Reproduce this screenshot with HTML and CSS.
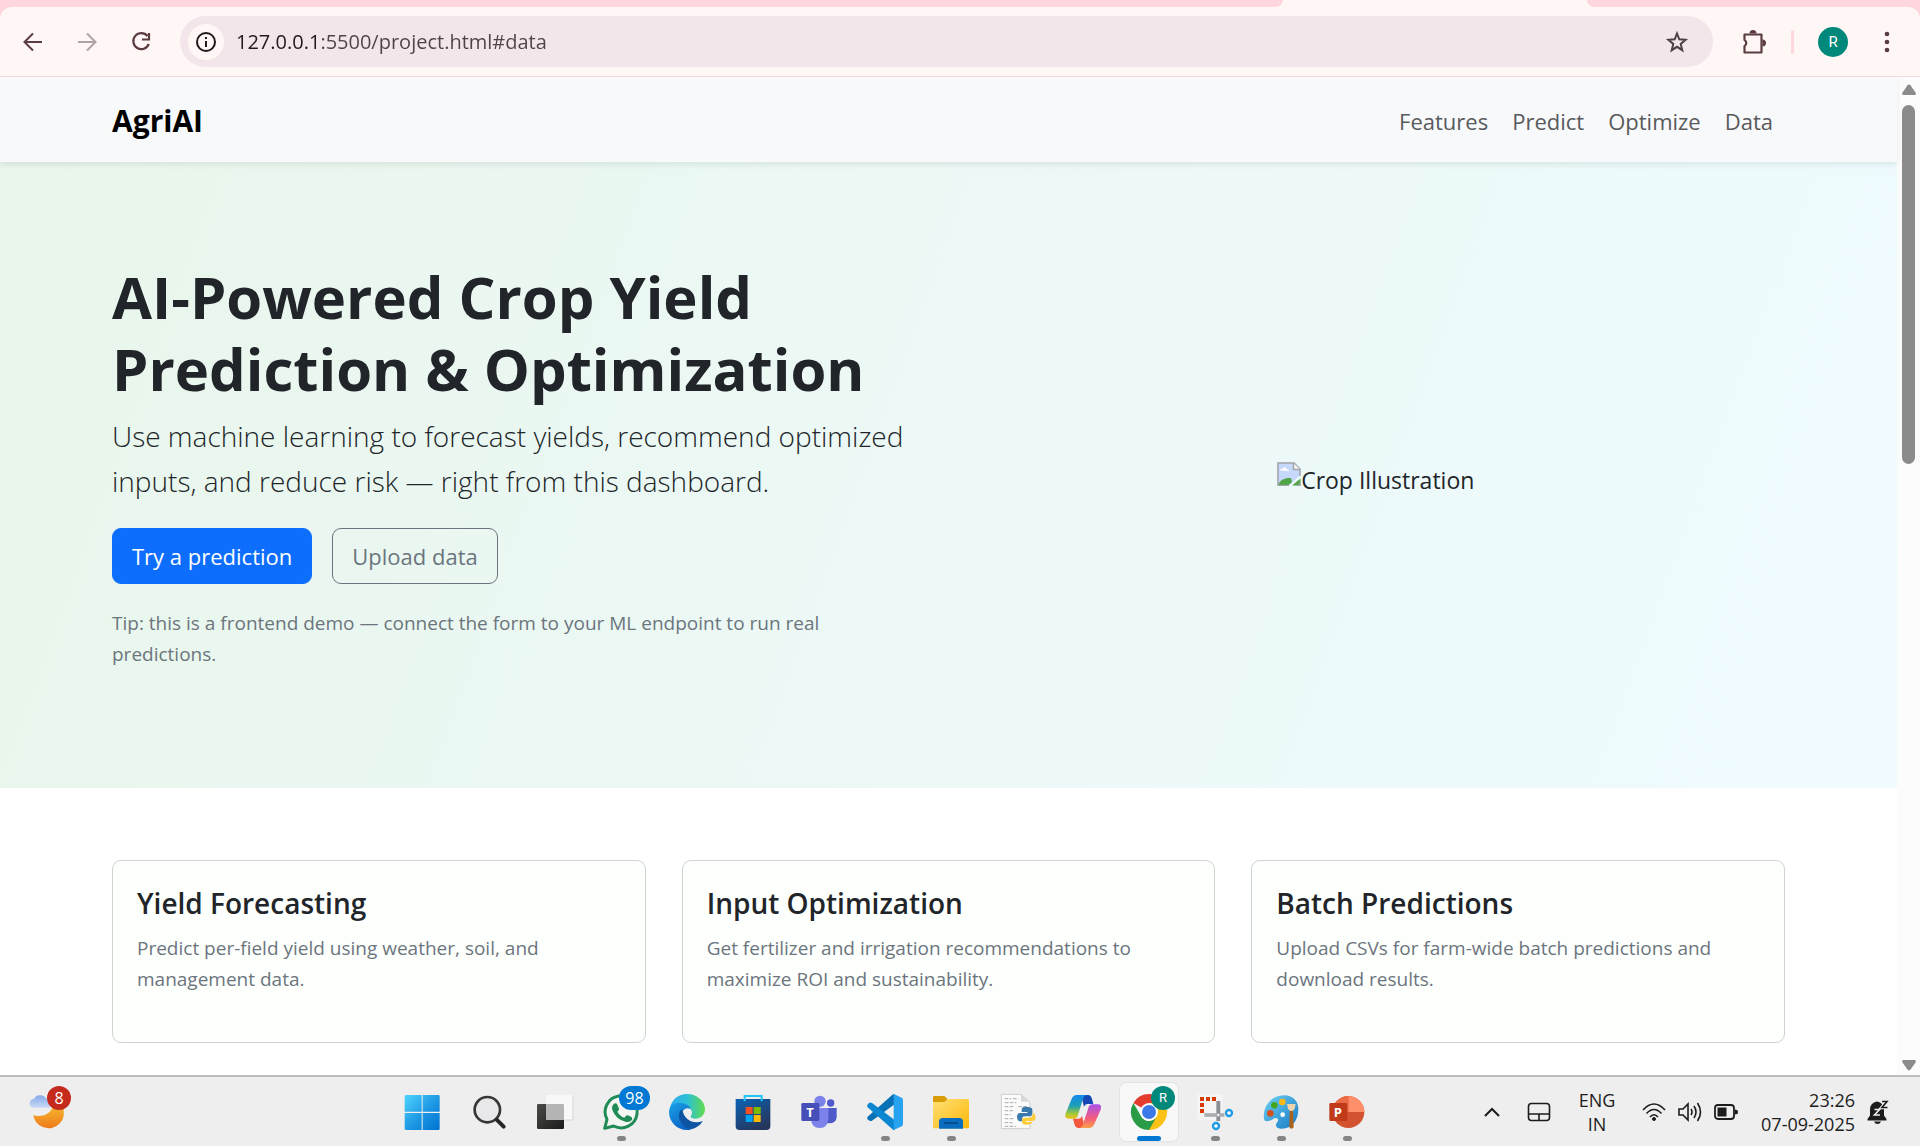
FILE: index.html
```html
<!DOCTYPE html>
<html lang="en">
<head>
<meta charset="utf-8">
<title>AgriAI</title>
<link rel="stylesheet" href="styles.css">
</head>
<body>
<header class="browser">
  <div class="tabstrip"><span class="tabs-before"></span><span class="tab-active"></span><span class="tabs-after"></span></div>
  <div class="toolbar-wrap">
    <div class="toolbar">
      <button class="tool" aria-label="Back"><svg width="24" height="24" viewBox="0 0 24 24" fill="none" stroke="#5b3c42" stroke-width="2"><path d="M21 12H4.500M12 3.500 3.500 12l8.500 8.500"/></svg></button>
      <button class="tool" aria-label="Forward"><svg width="24" height="24" viewBox="0 0 24 24" fill="none" stroke="#b0a3a4" stroke-width="2"><path d="M3 12h16.500M12 3.500l8.500 8.500-8.500 8.500"/></svg></button>
      <button class="tool" aria-label="Reload"><svg width="24" height="24" viewBox="0 0 24 24" fill="none" stroke="#5b3c42" stroke-width="2.200"><path d="M18.500 6A8 8 0 1 0 19.800 14"/><path d="M20 3v6.500h-7" /></svg></button>
      <div class="omnibox">
        <button class="site-info" aria-label="Site information"><svg width="22" height="22" viewBox="0 0 22 22" fill="none" stroke="#1f1a1b" stroke-width="2"><circle cx="11" cy="11" r="9"/><path d="M11 10v6M11 6v2"/></svg></button>
        <input class="url" type="text" aria-label="Address" value="127.0.0.1:5500/project.html#data">
        <button class="star" aria-label="Bookmark this page"><svg width="24" height="24" viewBox="0 0 24 24" fill="none" stroke="#4d4144" stroke-width="2"><path d="M12 3.500l2.300 5.800 6.300.5-4.900 4.100 1.600 6.300L12 16.800l-5.300 3.400 1.600-6.300-4.900-4.100 6.300-.5z"/></svg></button>
      </div>
      <button class="extensions" aria-label="Extensions"><svg width="26" height="26" viewBox="0 0 26 26"><path d="M3.500 5.500h17v18h-17v-6.200a3.800 3.800 0 0 0 0-6.400z" fill="none" stroke="#5b3c42" stroke-width="2.200" stroke-linejoin="round"/><path d="M8.500 4.500a3.500 3.500 0 0 1 7 0zM21.500 10.500a3.500 3.500 0 0 1 0 7z" fill="#5b3c42"/></svg></button>
      <span class="divider"></span>
      <button class="profile" aria-label="Profile">R</button>
      <button class="menu" aria-label="Menu"><svg width="24" height="24" viewBox="0 0 24 24" fill="#5b3c42"><circle cx="12" cy="4" r="2.300"/><circle cx="12" cy="12" r="2.300"/><circle cx="12" cy="20" r="2.300"/></svg></button>
    </div>
  </div>
</header>

<div class="viewport">
  <div class="page">
    <nav class="navbar">
      <a class="brand" href="#">AgriAI</a>
      <div class="links"><a href="#features">Features</a><a href="#predict">Predict</a><a href="#optimize">Optimize</a><a href="#data">Data</a></div>
    </nav>
    <section class="hero">
      <div class="hero-copy">
        <h1>AI-Powered Crop Yield Prediction &amp; Optimization</h1>
        <p class="lead">Use machine learning to forecast yields, recommend optimized inputs, and reduce risk — right from this dashboard.</p>
        <div class="actions">
          <button class="btn primary">Try a prediction</button>
          <button class="btn outline">Upload data</button>
        </div>
        <p class="tip">Tip: this is a frontend demo — connect the form to your ML endpoint to run real predictions.</p>
      </div>
      <div class="hero-image">
        <svg width="24" height="24" viewBox="0 0 24 24"><path d="M.5.500h16.500l6 6v7L12 23.500H.500z" fill="#c6d8fb"/><path d="M3 8.500c.3-2 2-2 2.500-1.500 1-2.500 4-2 4 .2 1.500-.2 2.500.8 2.500 1.800z" fill="#fff"/><path d="M1 23c2-5 7-7.500 13-7l1 4-4 3.500z" fill="#4ea545"/><path d="M15 23.500l8.500-7v7z" fill="#4ea545"/><path d="M12 23.500H1V1h16l6 6v7M19.500 23.500H23V20" fill="none" stroke="#a3a5a8" stroke-width="1.500"/><path d="M16.500 1v6.500H23" fill="#f6f6f6" stroke="#a3a5a8" stroke-width="1.500"/></svg><span>Crop Illustration</span>
      </div>
    </section>
    <section class="features" id="features">
      <article class="card"><h2>Yield Forecasting</h2><p>Predict per-field yield using weather, soil, and management data.</p></article>
      <article class="card"><h2>Input Optimization</h2><p>Get fertilizer and irrigation recommendations to maximize ROI and sustainability.</p></article>
      <article class="card"><h2>Batch Predictions</h2><p>Upload CSVs for farm-wide batch predictions and download results.</p></article>
    </section>
  </div>
  <div class="scrollbar">
    <svg width="16" height="12" viewBox="0 0 16 12" fill="#8b8b8b"><path d="M6.600 1.200Q8 0 9.400 1.200L14.500 8.500Q15.500 11 13.500 11H2.500Q.5 11 1.500 8.500z"/></svg>
    <div class="track"><div class="thumb"></div></div>
    <svg width="16" height="12" viewBox="0 0 16 12" fill="#8b8b8b"><path d="M6.600 10.800Q8 12 9.400 10.800L14.500 3.500Q15.500 1 13.500 1H2.500Q.5 1 1.500 3.500z"/></svg>
  </div>
</div>

<footer class="taskbar">
  <div class="widgets">
    <button class="app weather" aria-label="Weather"><svg viewBox="0 0 108 108"><defs><linearGradient id="moon" x2="0" y2="1"><stop offset="0" stop-color="#f5b52f"/><stop offset="1" stop-color="#ee7a1b"/></linearGradient><linearGradient id="cloud" x2="0" y2="1"><stop offset="0" stop-color="#86a9ea"/><stop offset="1" stop-color="#c9daf6"/></linearGradient></defs><path d="M101 50A46 46 0 0 1 10 64C36 70 62 60 68 38L101 40z" fill="url(#moon)"/><path d="M12 41a13 13 0 0 1 0-26 20 18 0 0 1 36-2q12 4 12 28z" fill="url(#cloud)"/></svg><span class="badge red">8</span></button>
  </div>
  <div class="apps">
    <button class="app" aria-label="Start"><svg viewBox="0 0 108 108"><defs><linearGradient id="win" x2="1" y2="1"><stop offset="0" stop-color="#4fd5ff"/><stop offset=".55" stop-color="#1c96e3"/><stop offset="1" stop-color="#0072d0"/></linearGradient></defs><path d="M2 3h48v50H-1V7q0-4 4-4zM53 3h47q4 0 4 4v46H53zM-1 57h51v51H3q-4 0-4-4zM53 57h51v47q0 4-4 4H53z" fill="url(#win)"/></svg></button>
    <button class="app" aria-label="Search"><svg viewBox="0 0 108 108"><circle cx="49" cy="47" r="38" fill="#e8e8ea" stroke="#363636" stroke-width="8"/><path d="M77 77l21 21" stroke="#262626" stroke-width="12" stroke-linecap="round"/></svg></button>
    <button class="app" aria-label="Task view"><svg viewBox="0 0 108 108"><defs><linearGradient id="tv" x2="1" y2="1"><stop offset="0" stop-color="#4a4a48"/><stop offset="1" stop-color="#1b1b1b"/></linearGradient></defs><rect y="30" width="81" height="75" rx="4" fill="url(#tv)"/><path d="M27 7q0-4 4-4h73q4 0 4 4v67q0 4-4 4H27z" fill="#f8f8f8"/><path d="M27 30h50q4 0 4 4v44H27z" fill="#b4b4b4"/><path d="M82 78h26V8" fill="none" stroke="#d4d4d4" stroke-width="3"/></svg></button>
    <button class="app open" aria-label="WhatsApp"><svg viewBox="0 0 108 108"><path d="M5 103l7-27A48 48 0 1 1 32 96z" fill="#f4f6f4" stroke="#1f8b55" stroke-width="9" stroke-linejoin="round"/><path d="M33 29q7-4 10 3l5 12q1 4-5 9 8 14 21 18l7-7q4-2 13 4 6 3 3 9-5 9-18 7Q39 77 28 48q-3-12 5-19z" fill="#1f8b55"/></svg><span class="badge blue">98</span></button>
    <button class="app" aria-label="Edge"><svg viewBox="0 0 108 108"><defs><linearGradient id="e1" x2="1"><stop offset="0" stop-color="#2fa9f0"/><stop offset=".5" stop-color="#2cc0d6"/><stop offset="1" stop-color="#62db4c"/></linearGradient><linearGradient id="e2" x2=".6" y2="1"><stop offset="0" stop-color="#1aa2e6"/><stop offset="1" stop-color="#0b62c5"/></linearGradient></defs><path d="M2 45C8 16 28 0 54 0c31 0 54 22 54 46 0 18-14 28-29 28-11 0-17-4-12-10 4-6 3-15-5-21Q30 22 2 45z" fill="url(#e1)"/><path d="M0 54C1 32 18 26 33 27c18 1 31 10 32 18-12-7-28 2-27 21 2 23 17 36 31 39-6 3-11 3-15 3C24 108 0 84 0 54z" fill="url(#e2)"/><path d="M40 45q-12 8-10 24c3 22 22 38 39 36 15-4 27-13 32-24-27 12-58-4-61-36z" fill="#0d55a2"/></svg></button>
    <button class="app" aria-label="Microsoft Store"><svg viewBox="0 0 108 108"><defs><linearGradient id="st" x2=".6" y2="1"><stop offset="0" stop-color="#0b63b5"/><stop offset="1" stop-color="#25365c"/></linearGradient></defs><path d="M2 15h104v82q0 11-11 11H13q-11 0-11-11z" fill="url(#st)"/><path d="M29 22V6h51v16" fill="none" stroke="#22c5f4" stroke-width="6"/><path d="M32 39h21v21H32z" fill="#f25022"/><path d="M56 39h21v21H56z" fill="#7fba00"/><path d="M32 63h21v21H32z" fill="#00a4ef"/><path d="M56 63h21v21H56z" fill="#ffb900"/></svg></button>
    <button class="app" aria-label="Teams"><svg viewBox="0 0 108 108"><circle cx="57" cy="22" r="17" fill="#7b83eb"/><circle cx="89" cy="27" r="11" fill="#5059c9"/><path d="M75 42h32v28q-2 18-22 18H75z" fill="#5059c9"/><path d="M30 42h52v34q-2 26-26 26T30 76z" fill="#7b83eb"/><rect x="1" y="27" width="54" height="54" rx="4" fill="#464eb8"/></svg><span class="mark">T</span></button>
    <button class="app open" aria-label="Visual Studio Code"><svg viewBox="0 0 108 108"><path d="M5 79l-4-4q-2-4 1-7L78 1h5v30L15 80q-5 3-10-1z" fill="#0870b5"/><path d="M5 28l-4 5q-2 4 1 7l77 68h4V78L15 27q-5-3-10 1z" fill="#0c86d0"/><path d="M80 0l24 11q4 2 4 7v72q0 5-4 7l-24 11z" fill="#28a3f0"/></svg></button>
    <button class="app open" aria-label="File Explorer"><svg viewBox="0 0 108 108"><defs><linearGradient id="fx" x2="1" y2="1"><stop offset="0" stop-color="#ffdf76"/><stop offset="1" stop-color="#fbb808"/></linearGradient></defs><path d="M0 10q0-4 4-4h30l9 8v20H0z" fill="#d89c07"/><path d="M0 24h34l10-9h60q4 0 4 4v80q0 4-4 4H0z" fill="url(#fx)"/><path d="M18 104V83q0-11 11-11h50q11 0 11 11v21z" fill="#096cbe"/><path d="M33 87h42" stroke="#053f75" stroke-width="4"/></svg></button>
    <button class="app" aria-label="Python file"><svg viewBox="0 0 108 108"><path d="M7 1h59l27 24v79H7z" fill="#fbfbfb" stroke="#ccc" stroke-width="3"/><path d="M66 1v22h26z" fill="#d9d9d9"/><path d="M17 14h20M42 14h16M17 26h35M17 38h30M58 38h26M17 50h25M17 62h18M17 74h28M17 86h24M17 97h34" stroke="#aaa" stroke-width="3" stroke-dasharray="11 4"/><path d="M80 38q-12 0-12 8v8h17v3H62q-8 2-8 12 1 12 9 13h6v-8q1-7 9-7h15q7-1 7-8V46q-1-8-20-8z" fill="#397aae"/><path d="M81 92q-12 0-12-8v-7q0-6 8-6h16q8-1 8-8v-6h2q7 3 7 13-1 11-10 11H82v3h18q-1 8-19 8z" fill="#fbce3a"/></svg></button>
    <button class="app" aria-label="Copilot"><svg viewBox="0 0 108 108"><defs><linearGradient id="c1" x2="0" y2="1"><stop offset="0" stop-color="#1589ee"/><stop offset=".45" stop-color="#1b9fb6"/><stop offset=".8" stop-color="#a8ca36"/><stop offset="1" stop-color="#eebf20"/></linearGradient><linearGradient id="c2" x2="0" y2="1"><stop offset="0" stop-color="#a950ea"/><stop offset=".6" stop-color="#f55d7b"/><stop offset="1" stop-color="#fba04a"/></linearGradient></defs><path d="M48 3h21q9 0 12 12l4 15H67q-7 0-10 8z" fill="#1648b5"/><path d="M60 102H41q-10 0-13-13l-4-15h18q6 0 9-8z" fill="#f3573d"/><path d="M61 3H35q-11 0-16 14L2 58q-5 16 9 16h17q8 0 11-11l14-46Q57 4 66 3z" fill="url(#c1)"/><path d="M47 102h26q11 0 16-14l18-41q5-16-9-16H81q-8 0-11 11L55 88q-4 13-11 14z" fill="url(#c2)"/></svg></button>
    <button class="app open current" aria-label="Chrome"><svg viewBox="0 0 108 108"><path d="M54 54L7.200 27a54 54 0 0 1 93.600 0z" fill="#e33b2e"/><path d="M54 54L54 108A54 54 0 0 0 100.800 27H54z" fill="#fbc116"/><path d="M7.200 27L30.700 67.500A27 27 0 0 0 77 68L54 108A54 54 0 0 1 7.200 27z" fill="#2a9c48"/><circle cx="54" cy="54" r="27" fill="#fff"/><circle cx="54" cy="54" r="21" fill="#3c79e8"/></svg><span class="badge teal">R</span></button>
    <button class="app open" aria-label="Snipping Tool"><svg viewBox="0 0 108 108"><rect x="1" y="1" width="76" height="76" rx="6" fill="#f5f5f6"/><path d="M9 15h48M15 9v48" stroke="#d83b01" stroke-width="12" stroke-dasharray="12 6"/><path d="M64 21v60" stroke="#8b9196" stroke-width="12"/><path d="M22 63h60" stroke="#a9aeb2" stroke-width="11"/><circle cx="64" cy="63" r="3" fill="#fff"/><circle cx="96" cy="57" r="9" fill="#fff" stroke="#1e9ce6" stroke-width="7"/><circle cx="57" cy="96" r="9" fill="#fff" stroke="#1e9ce6" stroke-width="7"/></svg></button>
    <button class="app open" aria-label="Paint"><svg viewBox="0 0 108 108"><defs><linearGradient id="pt" x2="1" y2="1"><stop offset="0" stop-color="#6fd2f3"/><stop offset="1" stop-color="#1478c4"/></linearGradient></defs><path d="M4 79C-4 43 20 4 64 4c28 0 42 20 42 41 0 35-20 60-52 59-18-1-17-13-11-20 6-9-1-14-9-11-8 6-22 12-30 6z" fill="url(#pt)"/><circle cx="22" cy="58" r="10" fill="#d5501b"/><circle cx="34" cy="34" r="10" fill="#46a51d"/><circle cx="58" cy="24" r="10" fill="#fdb913"/><circle cx="59" cy="62" r="7" fill="#fff"/><path d="M80 50h10l2 50q-7 8-13 0z" fill="#a9631c"/><path d="M72 30h26l-3 14q-3 7-10 7t-10-7z" fill="#eed3ac"/></svg></button>
    <button class="app open" aria-label="PowerPoint"><svg viewBox="0 0 108 108"><circle cx="58" cy="54" r="48" fill="#d35230"/><path d="M58 54V6a48 48 0 0 1 48 48z" fill="#ff8f6b"/><path d="M58 54V6A48 48 0 0 0 10 54z" fill="#ed6c47"/><rect x="1" y="27" width="54" height="54" rx="4" fill="#c13b1b"/></svg><span class="mark">P</span></button>
  </div>
  <div class="tray">
    <button class="chevron" aria-label="Show hidden icons"><svg width="18" height="12" viewBox="0 0 18 12" fill="none" stroke="#1c1c1c" stroke-width="2"><path d="M2 10l7-7 7 7"/></svg></button>
    <button class="touchpad" aria-label="Touchpad"><svg width="24" height="20" viewBox="0 0 24 20" fill="none" stroke="#1c1c1c" stroke-width="1.600"><rect x="1.500" y="1.500" width="21" height="17" rx="3"/><path d="M1.500 12h21M12 12v6"/></svg></button>
    <button class="lang">ENG<br>IN</button>
    <button class="status" aria-label="Network, sound and battery">
      <svg width="24" height="20" viewBox="0 0 24 20" fill="none" stroke="#1c1c1c" stroke-width="1.600"><path d="M1 8q11-12 22 0M4.500 11.500q7.500-8 15 0M8 15q4-4.500 8 0"/><circle cx="12" cy="17" r="1.500" fill="#1c1c1c" stroke-width="1"/></svg>
      <svg width="24" height="20" viewBox="0 0 24 20" fill="none" stroke="#1c1c1c" stroke-width="1.600"><path d="M1 7h4l5-5v16l-5-5H1zM13 7q2 3 0 6M16 4q4 6 0 12M19.500 1q6 9 0 18"/></svg>
      <svg width="24" height="20" viewBox="0 0 24 20"><rect x="1" y="3" width="19" height="14" rx="3" fill="none" stroke="#1c1c1c" stroke-width="1.800"/><path d="M3.500 5.500h9v9h-9zM21 7.500q3 0 3 2.500t-3 2.500z" fill="#1c1c1c"/></svg>
    </button>
    <button class="clock">23:26<br>07-09-2025</button>
    <button class="bell" aria-label="Notifications"><svg width="22" height="24" viewBox="0 0 22 24"><path d="M10 1.500Q3 2.500 3 10v5.500L.5 19v1.500h19V19L17 15.500V10Q17 2.500 10 1.500z" fill="#1c1c1c"/><path d="M7 21.500h7q-1 2.500-3.500 2.500T7 21.500z" fill="#1c1c1c"/><path d="M7.500 9.500h5l-5 5.500h5.500" fill="none" stroke="#eee" stroke-width="1.600"/><path d="M15 1.500h5l-5 6h5.500" fill="none" stroke="#eee" stroke-width="3.600"/><path d="M15 1.500h5l-5 6h5.500" fill="none" stroke="#1c1c1c" stroke-width="1.600"/></svg></button>
  </div>
</footer>
</body>
</html>
```
FILE: styles.css
```css
* { box-sizing: border-box; }
body {
  margin: 0;
  min-height: 100vh;
  display: flex;
  flex-direction: column;
  background: #fff;
  color: #212529;
  font-family: "Open Sans", "Noto Sans", sans-serif;
}
button { padding: 0; border: 0; background: none; color: inherit; font: inherit; cursor: pointer; }
a { color: inherit; text-decoration: none; }
h1, h2, p { margin: 0; }
svg { display: block; }

/* Browser frame */
.tabstrip { display: flex; height: 7px; background: #fff7f5; }
.tabs-before { flex: 1; background: #ffd6de; border-bottom-right-radius: 8px 7px; }
.tab-active { width: 304px; }
.tabs-after { width: 333px; background: #ffd6de; border-bottom-left-radius: 8px 7px; }
.toolbar-wrap { background: #ffd6de; }
.toolbar {
  display: flex;
  align-items: center;
  height: 70px;
  padding: 0 20px 0 21px;
  background: #fff7f5;
  border-bottom: 1px solid #fbd8dd;
  border-radius: 12px 12px 0 0;
}
.tool { width: 26px; margin-right: 28px; }
.omnibox {
  flex: 1;
  display: flex;
  align-items: center;
  height: 51px;
  margin-left: -3px;
  padding: 0 24px 0 8px;
  border-radius: 26px;
  background: #f2e6ea;
}
.site-info { width: 36px; height: 36px; display: grid; place-items: center; border-radius: 50%; background: #fff7f5; }
.url {
  flex: 1;
  min-width: 0;
  height: 36px;
  margin-left: 12px;
  padding: 0;
  border: 0;
  outline: 0;
  font: 20px "Open Sans", sans-serif;
  color: #4d4447;
  background: linear-gradient(90deg, #1f1a1b 84px, #4d4447 84px);
  -webkit-background-clip: text;
  background-clip: text;
  -webkit-text-fill-color: transparent;
}
.extensions { margin-left: 28px; }
.divider { width: 3px; height: 24px; margin: 0 24px; border-radius: 2px; background: #ffd6de; }
.profile { width: 30px; height: 30px; border-radius: 50%; background: #00897b; color: #fff; font: 15px Roboto, sans-serif; }
.menu { margin-left: 27px; margin-right: 1px; }

/* Web page and its scrollbar */
.viewport { flex: 1; display: flex; }
.page { flex: 1; min-width: 0; }
.scrollbar { width: 23px; display: flex; flex-direction: column; align-items: center; padding: 7px 0 4px; background: #fcfcfc; }
.track { flex: 1; width: 13px; padding: 9px 0; }
.thumb { height: 38%; border-radius: 7px; background: #8b8b8b; }

.navbar {
  position: relative;
  display: flex;
  align-items: center;
  justify-content: space-between;
  height: 85px;
  padding: 2px 112px 0;
  background: #f8f9fb;
  box-shadow: 0 3px 6px rgba(0, 0, 0, .08);
}
.brand { color: #000; font-size: 30px; font-weight: 700; }
.links { display: flex; gap: 24px; padding-right: 12px; color: #595a5b; font-size: 22px; }

.hero {
  display: grid;
  grid-template-columns: 1fr 1fr;
  gap: 36px;
  padding: 99px 112px 94px;
  background: linear-gradient(110deg, #e8f6eb, #ebf8f4 40%, #effbff);
}
.hero h1 { font-size: 58px; line-height: 72px; font-weight: 700; }
.lead { margin: 9px 0 24px; font-size: 28px; line-height: 45px; font-weight: 300; }
.actions { display: flex; gap: 20px; }
.btn { height: 56px; padding: 0 19px; border: 1px solid #6c757d; border-radius: 9px; color: #6c757d; font-size: 22px; }
.btn.primary { border-color: #0d6efd; background: #0d6efd; color: #fff; }
.tip { max-width: 780px; margin: 24px 0; color: #6c757d; font-size: 19px; line-height: 31px; }
.hero-image { display: flex; align-items: center; justify-content: center; padding-top: 4px; font-size: 23px; }
.hero-image svg { margin-bottom: 12px; }

.features { display: grid; grid-template-columns: repeat(3, 1fr); gap: 36px; padding: 72px 112px 31px; }
.card { padding: 24px 24px 47px; border: 1px solid #cfd4d1; border-radius: 9px; background: #fdfffd; }
.card h2 { margin-bottom: 12px; font-size: 28px; line-height: 36px; font-weight: 600; }
.card p { color: #6c757d; font-size: 19px; line-height: 31px; }

/* Windows taskbar */
.taskbar {
  display: grid;
  grid-template-columns: 42fr auto 58fr;
  align-items: center;
  height: 71px;
  border-top: 2px solid #bdbdbd;
  background: #eee;
  color: #1c1c1c;
}
.widgets { padding-left: 19px; }
.apps { display: flex; gap: 8px; }
.app { position: relative; width: 58px; height: 58px; display: grid; place-items: center; border-radius: 6px; }
.app svg { width: 36px; height: 36px; overflow: visible; }
.app.open::after { content: ""; position: absolute; bottom: 0; left: 25px; width: 9px; height: 5px; border-radius: 3px; background: #858585; }
.app.current { background: #f8f8f8; box-shadow: 0 0 0 1px #e3e3e3; }
.app.current::after { left: 17px; width: 24px; background: #0078d4; }
.badge { position: absolute; top: 3px; left: 31px; width: 24px; height: 24px; border-radius: 12px; color: #fff; font: 16px/24px "Open Sans", sans-serif; text-align: center; }
.badge.red { left: 28px; background: #c42b1c; }
.badge.blue { left: 27px; width: 31px; background: #0078d4; }
.badge.teal { background: #00897b; font: 13px/24px Roboto, sans-serif; }
.mark { position: absolute; left: 11px; top: 20px; width: 18px; color: #fff; font-size: 13px; line-height: 18px; font-weight: 700; text-align: center; }
.tray { display: flex; align-items: center; justify-content: flex-end; padding-right: 31px; font-size: 18px; line-height: 24px; }
.chevron { margin-right: 26px; }
.touchpad { margin-right: 27px; }
.lang { width: 38px; margin-right: 26px; text-align: center; }
.status { display: flex; gap: 12px; margin-right: 23px; }
.clock { margin-right: 12px; text-align: right; }
```
